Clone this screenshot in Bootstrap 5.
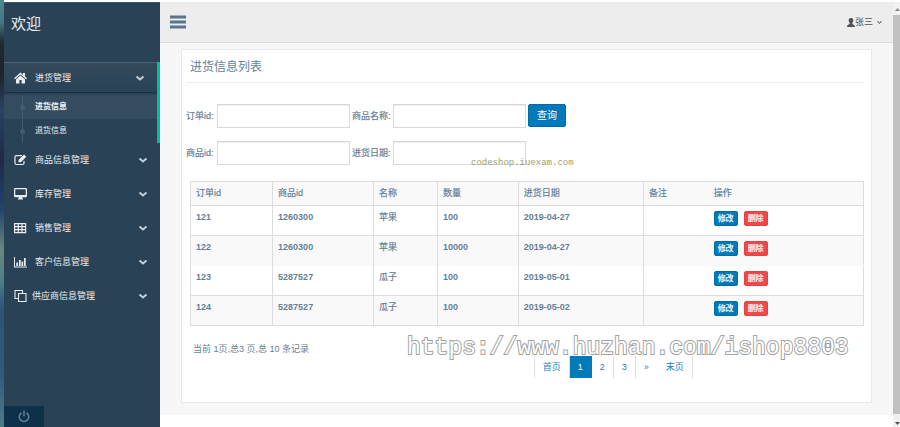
<!DOCTYPE html>
<html lang="zh-CN">
<head>
<meta charset="utf-8">
<meta name="viewport" content="width=device-width, initial-scale=1">
<title>进货信息列表</title>
<link rel="stylesheet" href="https://cdn.jsdelivr.net/npm/bootstrap@5.3.0/dist/css/bootstrap.min.css">
<style>
body{font-family:"Liberation Sans","Noto Sans CJK SC",sans-serif;font-size:9px;line-height:12px;color:#667f99;background:#fff}
a{text-decoration:none;color:inherit}
.shell{min-height:100vh;padding-top:2px}
.edge{width:4px;margin-top:-2px;background:linear-gradient(#4e8590 0,#477883 22px,#1f2b30 42px,#1c2527 75px,#2a4264 110px,#1d2a48 160px,#25446d 210px,#68887f 250px,#4c8087 280px,#2f5377 310px,#30597d 370px,#4a7c86 427px)}
.side{width:156px;background:#2a4256;border-top:1px solid #3d566a;color:#e9eef2}
.brand{font-size:15px;line-height:20px;padding:11px 7px 28px}
.group-on{border-right:3px solid #00c09a}
.menu-link{height:34px;padding:0 12px 0 10px;gap:8px}
.menu-link.open{height:31px;border-top:1px solid #4a6073;border-bottom:1px solid #1c3142;background:linear-gradient(#334a5c,#2a4256)}
.menu-link svg{width:13px;height:12px;flex:none}
.menu-link svg.arrow{width:10px;height:8px;margin-left:auto;color:#c3ced6}
.tight{gap:5px}
.sub{padding-top:2px}
.sub a{height:24px;font-size:8px;padding-left:31px;position:relative}
.sub a.on{background:#354b60;color:#fff;text-shadow:0 0 1px #fff}
.sub a::before{content:"";position:absolute;left:18px;top:0;bottom:0;border-left:1px solid #425c70}
.sub a::after{content:"";position:absolute;left:16px;top:10px;width:5px;height:5px;border-radius:50%;background:#425c70}
.power{width:40px;height:21px;background:#0e3048;color:#5a7f9b}
.topnav{height:41px;background:#ededed;border-bottom:1px solid #d9dee4;padding:0 11px 0 10px;color:#515356}
.bars{color:#5a738e;line-height:0}
.canvas{background:#f7f7f7;padding:6px 21px 12px 21px}
.panel{background:#fff;border:1px solid #e6e9ed;padding:5px 7px 23px 4px;min-height:354px}
.panel h1{font-size:12px;line-height:24px;margin:0;padding:0 4px 3px;border-bottom:1px solid #e9eded;font-weight:400}
.filters{padding-top:20px}
.filter-row{gap:2px;height:25px}
.filter-row + .filter-row{margin-top:12px}
.filter-row label{white-space:nowrap;-webkit-text-stroke:0.2px}
.w-first{width:29px}.w-second{width:39px}
.filter-row input{width:133px;height:24px;border:1px solid #d8d8d8;border-radius:0;box-shadow:inset 0 1px 0 #f0f0f0;padding:2px 5px;font-size:9px;min-height:0}
.search{background:#007ab8;border:1px solid #006ca4;color:#fff;border-radius:2px;font-size:10px;line-height:12px;padding:0 8px;height:23px}
.list-wrap{padding:16px 0 0 4px}
.list{table-layout:fixed;margin:0;font-size:9px;border:1px solid #ddd;--bs-table-bg:transparent}
.list th,.list td{padding:5px 5px 6px;border:0 solid #ddd;border-right-width:1px;border-top-width:1px;color:#667f99;line-height:12px;font-weight:400;box-shadow:none}
.list th{background:#f9f9f9}
.list td{height:30px;font-weight:700}
.list td.zh{font-weight:400}
.list th,.list td.zh{-webkit-text-stroke:0.2px}
.list th:nth-child(n+6),.list td:nth-child(n+6){border-right-width:0}
.list th:last-child,.list td:last-child{padding-left:7px}
.list tbody tr:nth-child(even) td{background:#f9f9f9}
.list tbody tr:nth-child(3) td{border-top-color:#f9f9f9}
.acts{gap:6px}
.act{font-size:8px;line-height:10px;color:#fff;border-radius:2px;padding:0 3px;height:15px;border:1px solid #006ca4;background:#007ab8}
.act.del{border-color:#e8413f;background:#f04848}
.foot{display:grid;grid-template-columns:51% 49%;padding:17px 0 0 4px}
.foot p{margin:0;padding-left:3px}
.pager{margin:13px 0 0;padding:0;list-style:none}
.pager a{display:block;height:22px;line-height:22px;padding:0 8px;border-right:1px solid #ddd;color:#1681bb}
.pager li:first-child a{border-left:1px solid #ddd;border-radius:2px 0 0 2px}
.pager li:nth-child(5) a{border-right-color:transparent}
.pager .on a{background:#007ab8;color:#fff;border-color:#007ab8}
.scroller{width:7px;background:#f1f1f1;color:#8a8a8a}
.scroller i{width:7px;background:#c1c1c1}
.scroller svg{display:block;width:7px;height:13px}
.mark-small,.mark-big{position:absolute;white-space:nowrap;pointer-events:none}
.mark-small{left:471px;top:157px;font:9px/12px "Liberation Mono",monospace;color:#9aa06c}
.mark-big{left:407px;top:334px;font:23px/28px "Liberation Mono",monospace;color:#fff;-webkit-text-stroke:2px #a2a2a2;paint-order:stroke}
</style>
<script src="https://cdn.jsdelivr.net/npm/bootstrap@5.3.0/dist/js/bootstrap.bundle.min.js"></script>
</head>
<body>
<svg class="d-none"><symbol id="chev" viewBox="0 0 10 8"><path d="M1.500 2.500 5 5.500 8.500 2.500" fill="none" stroke="currentColor" stroke-width="2"/></symbol></svg>
<div class="shell d-flex position-relative">
  <div class="edge flex-shrink-0"></div>
  <aside class="side flex-shrink-0 d-flex flex-column">
    <div class="brand">欢迎</div>
    <nav>
      <div class="group-on">
        <a href="#" class="menu-link open d-flex align-items-center"><svg viewBox="0 0 13 12"><path fill="currentColor" d="M6.500.5 0 6.300l.9 1L6.500 2.500l5.600 4.800.9-1-2-1.800V1H9v1.800zM6.500 3.500 2 7.300V11.500h3.400V8h2.200v3.500H11V7.300z"/></svg>进货管理<svg class="arrow"><use href="#chev"/></svg></a>
        <div class="sub">
          <a href="#" class="on d-flex align-items-center">进货信息</a>
          <a href="#" class="d-flex align-items-center">退货信息</a>
        </div>
      </div>
      <a href="#" class="menu-link d-flex align-items-center"><svg viewBox="0 0 13 12"><path fill="none" stroke="currentColor" stroke-width="1.200" d="M8 1.600H2.500Q1 1.600 1 3v6q0 1.500 1.500 1.500h6Q10 10.500 10 9V7"/><path fill="currentColor" d="m4.500 6 5.500-5.500 2.300 2.300L6.800 8.300H4.500z"/></svg>商品信息管理<svg class="arrow"><use href="#chev"/></svg></a>
      <a href="#" class="menu-link d-flex align-items-center"><svg viewBox="0 0 13 12"><rect x=".6" y=".6" width="11.800" height="8" rx=".8" fill="none" stroke="currentColor" stroke-width="1.300"/><path fill="currentColor" d="M1 7h11v1.600H1zM5 9h3l.5 1.500h.5v1H4v-1h.5z"/></svg>库存管理<svg class="arrow"><use href="#chev"/></svg></a>
      <a href="#" class="menu-link d-flex align-items-center"><svg viewBox="0 0 13 12"><path fill="none" stroke="currentColor" stroke-width="1.200" d="M.6 1.600h11v9H.6zM.6 4.600h11M.6 7.600h11M4.300 1.600v9M8 1.600v9"/></svg>销售管理<svg class="arrow"><use href="#chev"/></svg></a>
      <a href="#" class="menu-link d-flex align-items-center"><svg viewBox="0 0 13 12"><path fill="currentColor" d="M0 1h1v9.500h12v1H0zM2.300 6.500H4V10H2.300zM5 4h1.700v6H5zM7.500 5.500h1.700V10H7.500zM10 2h1.700v8H10z"/></svg>客户信息管理<svg class="arrow"><use href="#chev"/></svg></a>
      <a href="#" class="menu-link tight d-flex align-items-center"><svg viewBox="0 0 13 12"><path fill="none" stroke="currentColor" stroke-width="1.100" d="M4.500 3.500h7.500v8H4.500zM4.500 8.500H1v-8h7.500v3"/></svg>供应商信息管理<svg class="arrow"><use href="#chev"/></svg></a>
    </nav>
    <button type="button" class="power mt-auto border-0 p-0 d-flex align-items-center justify-content-center" aria-label="退出"><svg width="12" height="13" viewBox="0 0 12 13" fill="none" stroke="currentColor" stroke-width="1.600"><path d="M3.500 2.800a4.700 4.700 0 1 0 5 0M6 .5v6"/></svg></button>
  </aside>
  <div class="flex-grow-1">
    <header class="topnav d-flex align-items-center justify-content-between">
      <button type="button" class="bars border-0 bg-transparent p-0" aria-label="菜单"><svg width="16" height="14" viewBox="0 0 16 14"><path fill="currentColor" d="M0 .5h16v3H0zM0 5.500h16v3H0zM0 10.500h16v3H0z"/></svg></button>
      <a href="#" class="d-flex align-items-center"><svg width="8" height="9" viewBox="0 0 8 9"><path fill="currentColor" d="M4 0c2.200 0 2.600 1.500 2.200 3.300C6 4.500 5.300 5 5.300 5.500 5.300 6.500 8 6.500 8 9H0c0-2.500 2.700-2.500 2.700-3.500C2.700 5 2 4.500 1.800 3.300 1.400 1.500 1.800 0 4 0z"/></svg>张三<svg class="ms-1" width="5" height="5" viewBox="0 0 5 5"><path fill="none" stroke="currentColor" d="m.5 1 2 2.500 2-2.500"/></svg></a>
    </header>
    <main class="canvas">
      <section class="panel">
        <h1>进货信息列表</h1>
        <form class="filters">
          <div class="filter-row d-flex align-items-center">
            <label class="w-first" for="oid">订单id:</label><input class="form-control" id="oid" type="text">
            <label class="w-second" for="pname">商品名称:</label><input class="form-control" id="pname" type="text">
            <button type="button" class="search">查询</button>
          </div>
          <div class="filter-row d-flex align-items-center">
            <label class="w-first" for="pid">商品id:</label><input class="form-control" id="pid" type="text">
            <label class="w-second" for="pdate">进货日期:</label><input class="form-control" id="pdate" type="text">
          </div>
        </form>
        <div class="list-wrap">
          <table class="table list">
            <colgroup><col style="width:12.2%"><col style="width:15%"><col style="width:9.5%"><col style="width:12%"><col style="width:18.6%"><col style="width:9.4%"><col style="width:23.3%"></colgroup>
            <thead><tr><th>订单id</th><th>商品id</th><th>名称</th><th>数量</th><th>进货日期</th><th>备注</th><th>操作</th></tr></thead>
            <tbody>
              <tr><td>121</td><td>1260300</td><td class="zh">苹果</td><td>100</td><td>2019-04-27</td><td></td><td class="zh"><div class="acts d-flex"><button type="button" class="act">修改</button><button type="button" class="act del">删除</button></div></td></tr>
              <tr><td>122</td><td>1260300</td><td class="zh">苹果</td><td>10000</td><td>2019-04-27</td><td></td><td class="zh"><div class="acts d-flex"><button type="button" class="act">修改</button><button type="button" class="act del">删除</button></div></td></tr>
              <tr><td>123</td><td>5287527</td><td class="zh">瓜子</td><td>100</td><td>2019-05-01</td><td></td><td class="zh"><div class="acts d-flex"><button type="button" class="act">修改</button><button type="button" class="act del">删除</button></div></td></tr>
              <tr><td>124</td><td>5287527</td><td class="zh">瓜子</td><td>100</td><td>2019-05-02</td><td></td><td class="zh"><div class="acts d-flex"><button type="button" class="act">修改</button><button type="button" class="act del">删除</button></div></td></tr>
            </tbody>
          </table>
        </div>
        <div class="foot">
          <p>当前 1页,总3 页,总 10 条记录</p>
          <ul class="pager d-flex">
            <li><a href="#">首页</a></li><li class="on"><a href="#">1</a></li><li><a href="#">2</a></li><li><a href="#">3</a></li><li><a href="#">»</a></li><li><a href="#">末页</a></li>
          </ul>
        </div>
      </section>
    </main>
  </div>
  <div class="scroller flex-shrink-0 d-flex flex-column">
    <svg viewBox="0 0 7 13"><path fill="currentColor" d="M2 9h5L4.500 6z"/></svg>
    <i class="flex-grow-1"></i>
    <svg viewBox="0 0 7 13"><path fill="#505050" d="M2 8h5l-2.500 3z"/></svg>
  </div>
  <div class="mark-small">codeshop.iuexam.com</div>
  <div class="mark-big">https://www.huzhan.com/ishop8803</div>
</div>
</body>
</html>
